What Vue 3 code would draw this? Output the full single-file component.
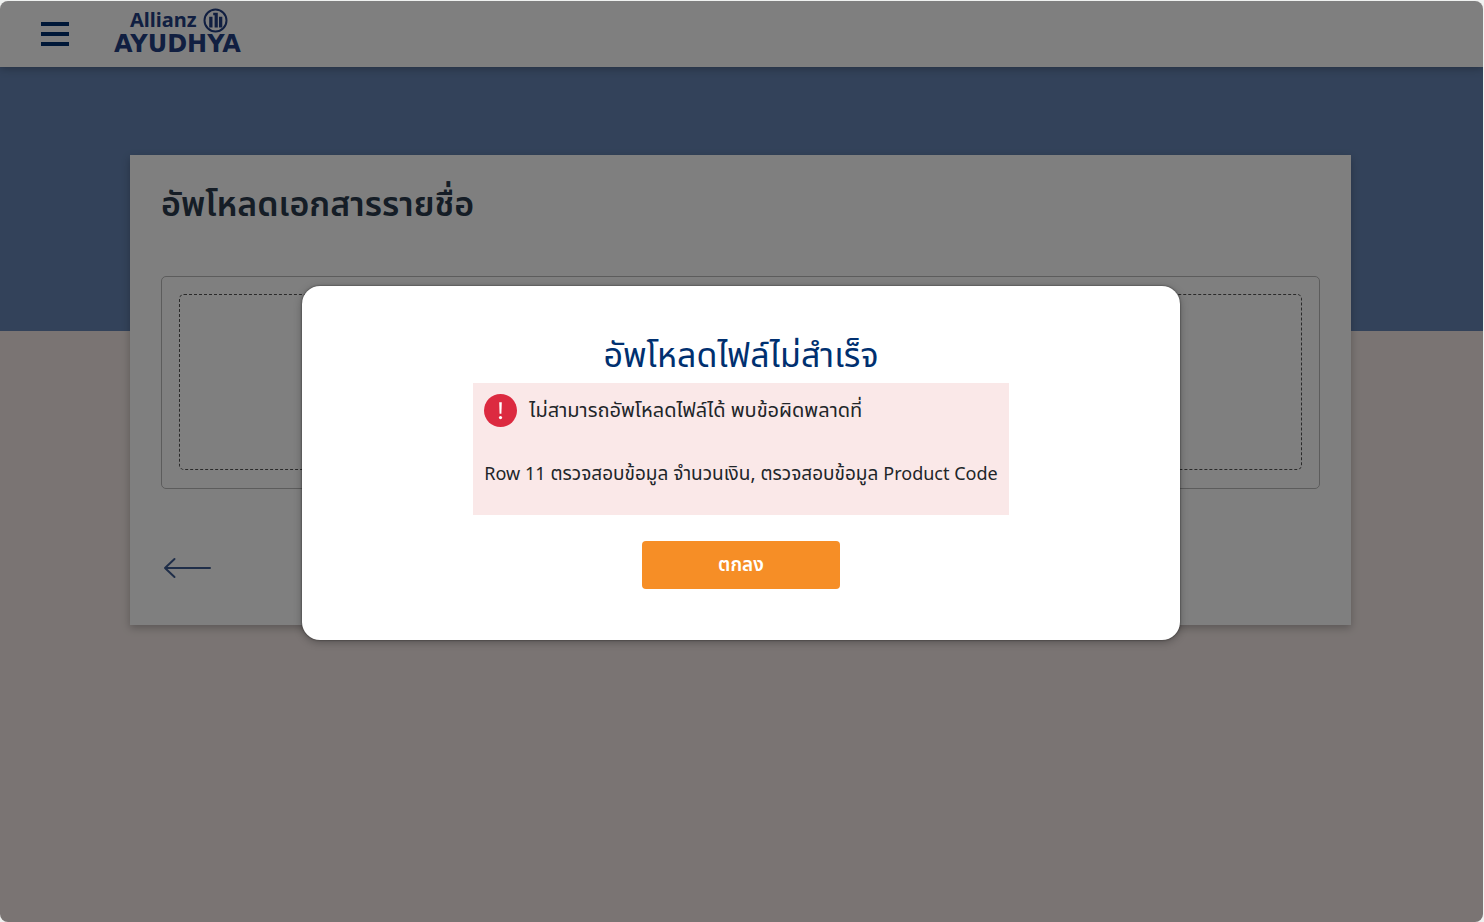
<script setup>
import { ref } from 'vue'

const open = ref(true)
const errors = ref([
  [
    { text: 'Row 11', lang: 'en' },
    { text: ' ตรวจสอบข้อมูล จำนวนเงิน, ตรวจสอบข้อมูล ', lang: 'th' },
    { text: 'Product Code', lang: 'en' }
  ]
])
</script>

<template>
  <div class="window">
    <header class="topbar">
      <button class="menu" type="button" aria-label="เมนู">
        <span></span><span></span><span></span>
      </button>
      <a class="brand" href="#" aria-label="Allianz Ayudhya">
        <svg width="134" height="58" viewBox="0 0 134 58" aria-hidden="true">
          <text class="brand-top" x="18" y="22">Allianz</text>
          <circle cx="103.500" cy="15.500" r="11" fill="none" stroke="currentColor" stroke-width="2" />
          <path d="M97.200 11.800h3.300v10.800h-3.300zM101.200 7.800h4.600v14.800h-3.200V10.200h-1.400zM107 11.800h3.300v10.800h-3.300z" fill="currentColor" />
          <text class="brand-bottom" x="2" y="47">AYUDHYA</text>
        </svg>
      </a>
    </header>

    <main class="content">
      <section class="card">
        <h1>อัพโหลดเอกสารรายชื่อ</h1>
        <div class="upload">
          <div class="dropzone"></div>
        </div>
        <button class="back" type="button" aria-label="ย้อนกลับ">
          <svg width="50" height="24" viewBox="0 0 50 24" fill="none" stroke="currentColor" stroke-width="2" stroke-linecap="round" stroke-linejoin="round" aria-hidden="true">
            <path d="M49 12H4M13.500 3L4 12l9.500 9" />
          </svg>
        </button>
      </section>
    </main>

    <div v-if="open" class="overlay">
      <div class="dialog" role="alertdialog" aria-modal="true" aria-labelledby="dialog-title">
        <h2 id="dialog-title">อัพโหลดไฟล์ไม่สำเร็จ</h2>
        <div class="alert">
          <div class="alert-head">
            <svg width="33" height="33" viewBox="0 0 33 33" aria-hidden="true">
              <circle cx="16.500" cy="16.500" r="16.500" fill="#dc2a40" />
              <path d="M15.200 8.200h2.600l-.4 11.600h-1.800z" fill="#fff" />
              <circle cx="16.500" cy="23.600" r="1.600" fill="#fff" />
            </svg>
            <p>ไม่สามารถอัพโหลดไฟล์ได้ พบข้อผิดพลาดที่</p>
          </div>
          <p v-for="(parts, index) in errors" :key="index" class="alert-row"><span v-for="part in parts" :key="part.text" :lang="part.lang" :class="part.lang">{{ part.text }}</span></p>
        </div>
        <button class="confirm" type="button" @click="open = false">ตกลง</button>
      </div>
    </div>
  </div>
</template>

<style>
body {
  margin: 0;
  background: #eff1f0;
}
</style>

<style scoped>
.window {
  position: relative;
  box-sizing: border-box;
  min-height: calc(100vh - 1px);
  margin: 1px 1px 0 0;
  border-radius: 8px;
  overflow: hidden;
  background: #f4e9e6;
  color: #212529;
  font-family: "Noto Sans", "Noto Sans Thai", sans-serif;
}

button {
  font-family: inherit;
  border: 0;
  padding: 0;
  cursor: pointer;
}

.topbar {
  position: relative;
  display: flex;
  align-items: center;
  gap: 43px;
  height: 66px;
  padding: 0 41px;
  background: #fff;
  box-shadow: 0 2px 8px rgba(0, 0, 0, 0.25);
}

.menu {
  display: flex;
  flex-direction: column;
  gap: 6px;
  width: 28px;
  background: none;
}

.menu span {
  height: 4px;
  background: #003070;
}

.brand {
  display: block;
  height: 58px;
  color: #223f83;
}

.brand-top {
  font: bold 20px "Noto Sans", sans-serif;
  fill: currentColor;
}

.brand-bottom {
  font: bold 24px "DejaVu Sans", sans-serif;
  fill: currentColor;
}

.content {
  padding: 88px 132px 88px 130px;
  background: linear-gradient(#6685b4 264px, transparent 264px);
}

.card {
  box-sizing: border-box;
  padding: 23px 31px 45px;
  background: #fff;
  box-shadow: 0 3px 8px rgba(0, 0, 0, 0.25);
}

h1 {
  margin: 0;
  font-size: 34px;
  line-height: 50px;
  font-weight: 600;
  color: #2b3b4d;
}

.upload {
  margin-top: 48px;
  padding: 17px 17px 18px;
  border: 1px solid #b8b8b8;
  border-radius: 5px;
}

.dropzone {
  height: 174px;
  border: 1px dashed #555;
  border-radius: 5px;
}

.back {
  display: block;
  height: 24px;
  margin-top: 67px;
  background: none;
  color: #3f5c92;
}

.overlay {
  position: absolute;
  inset: 0;
  display: flex;
  align-items: center;
  justify-content: center;
  padding: 2px 1px 0 0;
  background: rgba(0, 0, 0, 0.5);
}

.dialog {
  box-sizing: border-box;
  display: flex;
  flex-direction: column;
  align-items: center;
  width: 878px;
  max-width: 90%;
  padding: 42px 32px 51px;
  border-radius: 18px;
  background: #fff;
  box-shadow: 0 0 2px rgba(0, 0, 0, 0.6), 0 2px 8px rgba(0, 0, 0, 0.3);
}

h2 {
  margin: 0 0 2px;
  font-size: 34px;
  line-height: 53px;
  font-weight: 400;
  color: #003070;
}

.alert {
  padding: 11px 11px 29px;
  background: #fae8e8;
  line-height: 26px;
}

.alert p {
  margin: 0;
}

.alert-head {
  display: flex;
  align-items: center;
  gap: 12px;
  font-size: 20px;
}

.alert .alert-row {
  margin-top: 33px;
  font-size: 18px;
  white-space: pre-wrap;
}

.alert-row .th {
  font-size: 19px;
  line-height: 1;
}

.confirm {
  width: 198px;
  height: 48px;
  padding-top: 2px;
  margin-top: 26px;
  border-radius: 4px;
  background: #f68e26;
  color: #fff;
  font-size: 19px;
  font-weight: 600;
}
</style>
